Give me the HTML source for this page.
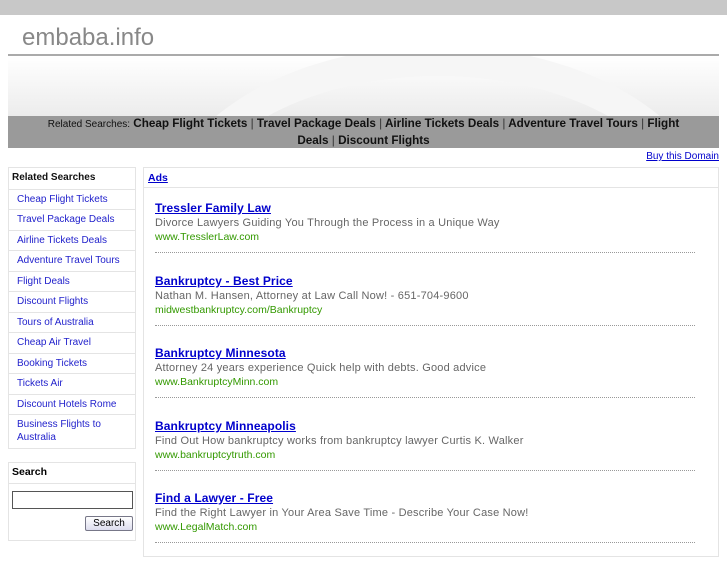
<!DOCTYPE html>
<html><head><style>
*{margin:0;padding:0;box-sizing:border-box}
body{width:727px;height:545px;overflow:hidden;background:#fff;font-family:"Liberation Sans",sans-serif;position:relative}
.top{position:absolute;left:0;top:0;width:727px;height:15px;background:#c8c8c8}
.title{position:absolute;left:22px;top:24px;font-size:24px;color:#888}
.hl{position:absolute;left:8px;top:54px;width:711px;height:2px;background:#aaa}
.band{position:absolute;left:8px;top:56px;width:711px;height:60px;background:linear-gradient(180deg,#fff,#ececec);overflow:hidden}
.band:before{content:"";position:absolute;left:150px;top:-10px;width:500px;height:300px;border-radius:50%;border:30px solid #f6f6f6}
.rel{position:absolute;left:8px;top:116px;width:711px;height:32px;background:#9a9a9a;text-align:center;font-size:11.7px;line-height:16px;padding:0 10px;color:#111;font-weight:bold;white-space:nowrap}
.rel span{font-weight:normal;font-size:10px}
.rel i{font-style:normal;font-weight:normal;color:#333}
.buy{position:absolute;right:8px;top:151px;font-size:10px;color:#00c;text-decoration:underline}
.side{position:absolute;left:8px;top:167px;width:128px;border:1px solid #e4e4e4}
.side div{height:20.5px;border-top:1px solid #e4e4e4;font-size:10px;color:#22c;padding:4px 0 0 8px}
.side div.h{border:0;color:#111;font-weight:bold;padding-left:3px}
.side div.t{height:34px;line-height:13px;padding-top:3px}
.srch{position:absolute;left:8px;top:462px;width:128px;height:79px;border:1px solid #e4e4e4}
.srch b{display:block;font-size:10.5px;padding:3px 3px;height:21px;border-bottom:1px solid #e4e4e4}
.inp{position:absolute;left:3px;top:28px;width:121px;height:18px;border:1px solid #555}
.btn{position:absolute;left:76px;top:53px;width:48px;height:15px;border:1px solid #778;border-radius:2px;background:linear-gradient(#fff,#dde);font-size:10px;text-align:center;line-height:13px}
.main{position:absolute;left:143px;top:167px;width:576px;height:390px;border:1px solid #e4e4e4}
.ads{height:20px;border-bottom:1px solid #e4e4e4;font-size:10.5px;font-weight:bold;color:#00c;text-decoration:underline;padding:4px 0 0 4px}
.ad{position:absolute;left:11px;width:552px;height:73px}
.ad a{position:absolute;top:0;font-size:12px;letter-spacing:0.1px;font-weight:bold;color:#00c;text-decoration:underline}
.ad p{position:absolute;top:16px;font-size:11px;letter-spacing:0.2px;color:#666;white-space:nowrap}
.ad u{position:absolute;top:30px;font-size:10.5px;color:#390;text-decoration:none}
.ad s{position:absolute;top:51px;left:0;width:540px;border-top:1px dotted #999;text-decoration:none}
</style></head><body>
<div class="top"></div>
<div class="title">embaba.info</div>
<div class="hl"></div>
<div class="band"></div>
<div class="rel"><span>Related Searches:</span> Cheap Flight Tickets <i>|</i> Travel Package Deals <i>|</i> Airline Tickets Deals <i>|</i> Adventure Travel Tours <i>|</i> Flight<br>Deals <i>|</i> Discount Flights</div>
<div class="buy">Buy this Domain</div>
<div class="side">
<div class="h">Related Searches</div>
<div>Cheap Flight Tickets</div><div>Travel Package Deals</div><div>Airline Tickets Deals</div><div>Adventure Travel Tours</div><div>Flight Deals</div><div>Discount Flights</div><div>Tours of Australia</div><div>Cheap Air Travel</div><div>Booking Tickets</div><div>Tickets Air</div><div>Discount Hotels Rome</div><div class="t">Business Flights to Australia</div>
</div>
<div class="srch"><b>Search</b><div class="inp"></div><div class="btn">Search</div></div>
<div class="main">
<div class="ads">Ads</div>
<div class="ad" style="top:33px"><a>Tressler Family Law</a><p>Divorce Lawyers Guiding You Through the Process in a Unique Way</p><u>www.TresslerLaw.com</u><s></s></div>
<div class="ad" style="top:106px"><a>Bankruptcy - Best Price</a><p>Nathan M. Hansen, Attorney at Law Call Now! - 651-704-9600</p><u>midwestbankruptcy.com/Bankruptcy</u><s></s></div>
<div class="ad" style="top:178px"><a>Bankruptcy Minnesota</a><p>Attorney 24 years experience Quick help with debts. Good advice</p><u>www.BankruptcyMinn.com</u><s></s></div>
<div class="ad" style="top:251px"><a>Bankruptcy Minneapolis</a><p>Find Out How bankruptcy works from bankruptcy lawyer Curtis K. Walker</p><u>www.bankruptcytruth.com</u><s></s></div>
<div class="ad" style="top:323px"><a>Find a Lawyer - Free</a><p>Find the Right Lawyer in Your Area Save Time - Describe Your Case Now!</p><u>www.LegalMatch.com</u><s></s></div>
</div>
</body></html>
